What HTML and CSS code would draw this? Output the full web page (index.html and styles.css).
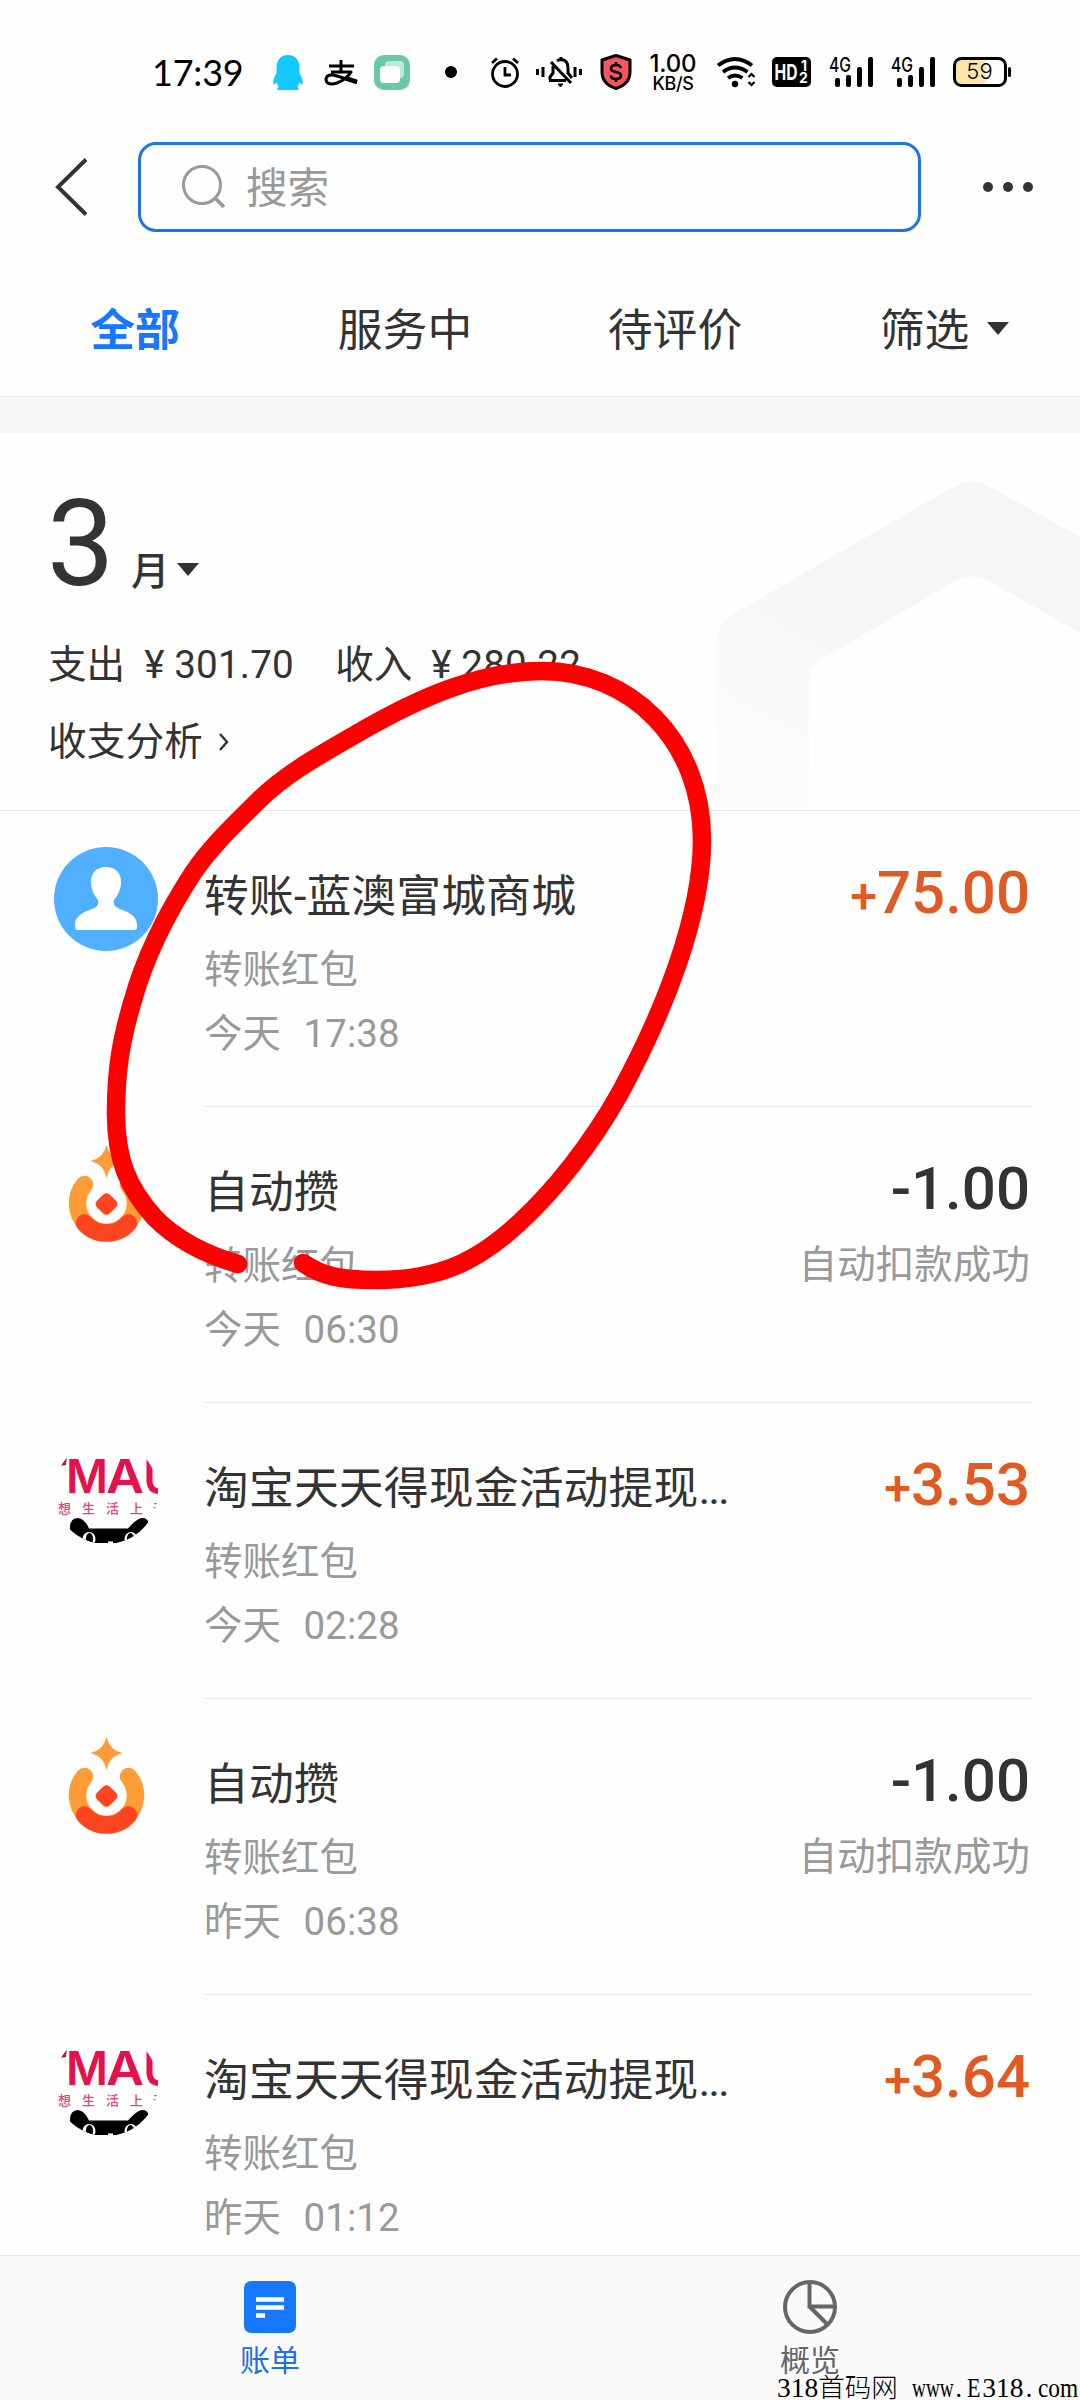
FILE: index.html
```html
<!DOCTYPE html>
<html lang="zh-CN">
<head>
<meta charset="utf-8">
<title>账单</title>
<link rel="stylesheet" href="styles.css">
</head>
<body>
<svg class="defs" width="0" height="0" aria-hidden="true">
  <defs>
    <clipPath id="round"><circle cx="52" cy="53" r="52"/></clipPath>
    <symbol id="saver" viewBox="0 0 104 104">
      <path d="M52.500 2Q55.500 15 68.500 18Q55.500 21 52.500 35Q49.500 21 36.500 18Q49.500 15 52.500 2Z" fill="#ff9c38"/>
      <path d="M30.500 41.500A29 29 0 1 0 74.500 41.500" fill="none" stroke="#ff9c38" stroke-width="17.500" stroke-linecap="round"/>
      <path d="M30.500 80A29 29 0 0 0 74.500 80" fill="none" stroke="#ff4420" stroke-width="17.500" stroke-linecap="round"/>
      <rect x="43.500" y="52" width="18" height="18" rx="4.500" transform="rotate(45 52.500 61)" fill="#ff4420"/>
    </symbol>
    <symbol id="tmall" viewBox="0 0 104 104">
      <g clip-path="url(#round)">
        <path d="M6 27L13 17L12 26Z" fill="#a31f50"/>
        <text class="tm-logo" x="12" y="54" textLength="42" lengthAdjust="spacingAndGlyphs">M</text>
        <text class="tm-logo" x="52" y="54" textLength="38" lengthAdjust="spacingAndGlyphs">A</text>
        <path d="M95.500 19V43Q96.500 52 105 52" fill="none" stroke="#e8104a" stroke-width="6"/>
        <text class="tm-tag" x="4 28 52 76 99" y="74">想生活上天</text>
        <path d="M16 92Q15 79 24 79Q31 80 35 89.500H74Q82 80 88 79Q96 79 94 88L90 108H16Z" fill="#000"/>
        <ellipse cx="35" cy="100" rx="6.500" ry="7" fill="#fff"/><ellipse cx="35.500" cy="100" rx="3.600" ry="6" fill="#000"/>
        <ellipse cx="77" cy="100" rx="6.500" ry="7" fill="#fff"/><ellipse cx="76.500" cy="100" rx="3.600" ry="6" fill="#000"/>
        <path d="M54 102.500h5v2h-5z" fill="#fff"/>
      </g>
    </symbol>
    <symbol id="signal" viewBox="829 54 45 38">
      <g fill="#000"><rect x="835" y="78" width="5" height="9" rx="2"/><rect x="846" y="75" width="5" height="12" rx="2"/><rect x="857" y="67" width="5" height="20" rx="2"/><rect x="868" y="57" width="5" height="30" rx="2"/></g>
      <text class="net" x="829" y="72" textLength="22" lengthAdjust="spacingAndGlyphs">4G</text>
    </symbol>
  </defs>
</svg>

<header class="status">
  <span class="clock">17:39</span>
  <svg class="i-qq" viewBox="273 54 30 38"><path d="M288 55c-8 0-11.500 6-11.500 13v5c-2.500 4-4 9-3 11 1 1 2.500-1 3-2 .5 2.500 1.500 4 2.500 5-2 .5-3 3 1 3h16c4 0 3-2.500 1-3 1-1 2-2.500 2.500-5 .5 1 2 3 3 2 1-2-.5-7-3-11v-5c0-7-3.500-13-11.500-13z" fill="#12c8ff"/></svg>
  <svg class="i-ali" viewBox="324 54 35 38"><g fill="none" stroke="#000" stroke-width="3"><path d="M329 66H354M341 60V72M331 72H351Q347 79 337 83Q326 86 326 79Q327 73 337 76Q346 79 357 82" stroke-linejoin="round"/><path d="M345 78L357 82" stroke-width="4.500"/></g></svg>
  <svg class="i-green" viewBox="374 54 36 38"><rect x="374" y="55" width="36" height="35" rx="10" fill="#67caa4"/><rect x="385" y="61" width="19" height="17" rx="4" fill="#bce8d8"/><rect x="380" y="66" width="20" height="17" rx="4" fill="#fff"/></svg>
  <span class="dot"></span>
  <svg class="i-alarm" viewBox="491 54 28 38"><g fill="none" stroke="#000" stroke-width="2.800"><circle cx="505" cy="74" r="12.500"/><path d="M492 63L497 58.500M518 63L513 58.500M505 67V75H511" /></g></svg>
  <svg class="i-bell" viewBox="536 54 46 38"><g fill="none" stroke="#000" stroke-width="3"><path d="M537.500 69V75M543 67V77M575 67V77M580.500 69V75"/><path d="M550 80V77L553 73V66M557 61Q559 59.500 561 59.500V57M561 59.500Q568 60 568 68V73L572 78M549 80.500H566M551 62L571 83"/><path d="M558 84H563L560.500 87Z" fill="#000" stroke-width="1"/></g></svg>
  <svg class="i-shield" viewBox="600 54 32 38"><path d="M616 55.500L630 60V72Q630 84 616 88.500Q602 84 602 72V60Z" fill="#f2575f" stroke="#000" stroke-width="3" stroke-linejoin="round"/><path d="M621 68Q620 65 616 65Q611 65 611 68.500Q611 71 616 72Q621 73 621 75.500Q621 79 616 79Q611 79 611 75.500M616 62V65M616 79V82" fill="none" stroke="#000" stroke-width="2.600"/></svg>
  <span class="speed"><b>1.00</b><b>KB/S</b></span>
  <svg class="i-wifi" viewBox="716 54 41 38"><g fill="none" stroke="#000" stroke-width="3.800"><path d="M718 65.500Q735 52.500 752 65.500M723 72Q735 63 747.500 72M728 78Q735 73 742.500 78"/><path d="M748.500 77L751.500 74L754.500 77M748.500 82L751.500 85L754.500 82" stroke-width="2.200"/></g><circle cx="735" cy="84" r="3.200"/></svg>
  <svg class="i-hd" viewBox="772 54 39 38"><rect x="772" y="57" width="39" height="30" rx="5"/><text class="hd" x="774.500" y="80" textLength="23" lengthAdjust="spacingAndGlyphs">HD</text><text class="hd-n" x="801" y="71">1</text><text class="hd-n" x="799" y="83">2</text></svg>
  <svg class="i-sig"><use href="#signal"/></svg>
  <svg class="i-sig"><use href="#signal"/></svg>
  <svg class="i-batt" viewBox="953 54 59 38"><rect x="956" y="60" width="30" height="25" rx="5" fill="#fbe6ab"/><rect x="954.500" y="58.500" width="51" height="27" rx="7" fill="none" stroke="#000" stroke-width="3"/><rect x="1008" y="67" width="3" height="10" rx="1.500"/><text class="pct" x="979.500" y="79" text-anchor="middle">59</text></svg>
</header>

<nav class="topbar">
  <svg class="back" viewBox="0 0 36 60"><path d="M34 2.500L6 30L34 57.500" fill="none" stroke="#333" stroke-width="4"/></svg>
  <div class="search">
    <svg class="lens" viewBox="0 0 46 46"><circle cx="21" cy="21" r="18.500" fill="none" stroke="#999" stroke-width="3"/><path d="M35 35L43 43" stroke="#999" stroke-width="3.500"/></svg>
    <span>搜索</span>
  </div>
  <div class="more"><i></i><i></i><i></i></div>
</nav>

<div class="tabs">
  <span class="on">全部</span><span>服务中</span><span>待评价</span><span>筛选<i class="tri"></i></span>
</div>
<div class="band"></div>

<section class="summary">
  <svg class="house" viewBox="716 470 364 339"><defs><linearGradient id="hg" gradientUnits="userSpaceOnUse" x1="740" y1="770" x2="840" y2="590"><stop offset="0" stop-color="#fcfcfc"/><stop offset="1" stop-color="#f6f6f6"/></linearGradient></defs><path d="M716 809V643Q716 624 735 612L953 486Q972 476 991 486L1080 536V632L991 581Q972 570 953 581L824 657Q809 666 809 682V809Z" fill="url(#hg)"/></svg>
  <div class="month"><span class="num">3</span><span class="yue">月</span><i class="tri"></i></div>
  <div class="totals"><span>支出</span><span class="yen">¥</span><span class="sum">301.70</span><span class="in">收入</span><span class="yen">¥</span><span class="sum">280.22</span></div>
  <div class="analysis">收支分析<svg viewBox="0 0 12 20"><path d="M2 2L9 10L2 18" fill="none" stroke="#333" stroke-width="2.400"/></svg></div>
</section>

<main class="list">
  <article class="item">
    <svg class="avatar" viewBox="0 0 104 104"><circle cx="52" cy="52" r="52" fill="#50b0ff"/><path d="M52 20C62 20 68 27 67 37C66 45 63 49 60 53C59 58 61 60 66 62C77 66 83 70 83 78V80Q83 83 80 83H24Q21 83 21 80V78C21 70 27 66 38 62C43 60 45 58 44 53C41 49 38 45 37 37C36 27 42 20 52 20Z" fill="#fff"/></svg>
    <div class="body"><div class="info"><h3>转账-蓝澳富城商城</h3><p>转账红包</p><p class="when">今天  <span>17:38</span></p></div><div class="amt plus"><strong><i>+</i>75.00</strong></div></div>
  </article>
  <article class="item">
    <svg class="avatar"><use href="#saver"/></svg>
    <div class="body"><div class="info"><h3>自动攒</h3><p>转账红包</p><p class="when">今天  <span>06:30</span></p></div><div class="amt"><strong>-1.00</strong><p>自动扣款成功</p></div></div>
  </article>
  <article class="item">
    <svg class="avatar"><use href="#tmall"/></svg>
    <div class="body"><div class="info"><h3>淘宝天天得现金活动提现<span class="dots">...</span></h3><p>转账红包</p><p class="when">今天  <span>02:28</span></p></div><div class="amt plus"><strong><i>+</i>3.53</strong></div></div>
  </article>
  <article class="item">
    <svg class="avatar"><use href="#saver"/></svg>
    <div class="body"><div class="info"><h3>自动攒</h3><p>转账红包</p><p class="when">昨天  <span>06:38</span></p></div><div class="amt"><strong>-1.00</strong><p>自动扣款成功</p></div></div>
  </article>
  <article class="item">
    <svg class="avatar"><use href="#tmall"/></svg>
    <div class="body"><div class="info"><h3>淘宝天天得现金活动提现<span class="dots">...</span></h3><p>转账红包</p><p class="when">昨天  <span>01:12</span></p></div><div class="amt plus"><strong><i>+</i>3.64</strong></div></div>
  </article>
</main>

<footer class="tabbar">
  <div class="tb on"><svg viewBox="0 0 56 56"><rect x="2" y="2" width="52" height="52" rx="7" fill="#1677ff"/><path d="M14 20.500H42M14 28.500H42M14 36.500H23" stroke="#fff" stroke-width="4.400"/></svg><span>账单</span></div>
  <div class="tb"><svg viewBox="0 0 56 56"><g fill="none" stroke="#666" stroke-width="4"><circle cx="28" cy="28" r="25"/><path d="M27.500 3V27.500H53M27.500 27.500L45 45"/></g></svg><span>概览</span></div>
</footer>

<svg class="marker" viewBox="0 0 1080 2400"><path d="M238 1264C200 1253 175 1238 155 1218C128 1188 116 1160 116 1113C116 1070 121 1040 133 1000C145 957 165 916 193 873C211 846 235 824 259 800C288 772 322 754 358 733C420 697 480 671 542 671C630 671 702 740 702 840C702 915 665 1010 620 1093C592 1143 555 1190 519 1223C478 1261 440 1280 376 1280C340 1280 322 1276 303 1263" fill="none" stroke="#f00" stroke-width="18.500" stroke-linecap="round" stroke-linejoin="round"/></svg>
<div class="watermark"><span>318</span><span class="cn">首码网</span><span class="nar w3">www</span><span class="cell">.</span><span class="nar e1">E</span><span>318</span><span class="cell">.</span><span class="nar co">com</span></div>
</body>
</html>
```
FILE: styles.css
```css
* { box-sizing: border-box; }
body {
  margin: 0;
  width: 1080px;
  height: 2400px;
  position: relative;
  overflow: hidden;
  display: flex;
  flex-direction: column;
  background: #fefefe;
  color: #333;
  font-family: Roboto, "Noto Sans CJK SC", sans-serif;
}
h3, p { margin: 0; font-weight: 400; }
.defs { position: absolute; }

.status { height: 142px; padding: 54px 0 0 152px; display: flex; align-items: flex-start; flex: none; }
.status svg { height: 38px; flex: none; display: block; }
.clock { width: 91px; font: 400 36px/36px Lato, sans-serif; color: #000; letter-spacing: -.2px; white-space: nowrap; }
.i-qq { width: 30px; margin-left: 30px; }
.i-ali { width: 35px; margin-left: 21px; }
.i-green { width: 36px; margin-left: 15px; }
.dot { width: 12px; height: 12px; border-radius: 50%; background: #000; margin: 12px 0 0 35px; }
.i-alarm { width: 28px; margin-left: 34px; }
.i-bell { width: 46px; margin-left: 17px; }
.i-shield { width: 32px; margin-left: 18px; }
.speed { width: 48px; margin-left: 17px; display: flex; flex-direction: column; align-items: center; color: #000; font-family: Inter, sans-serif; }
.speed b { font-weight: 500; font-size: 24px; line-height: 20px; letter-spacing: -.2px; }
.speed b + b { font-size: 18px; line-height: 20px; letter-spacing: -.4px; }
.i-wifi { width: 41px; margin-left: 19px; }
.i-hd { width: 39px; margin-left: 15px; }
.i-sig { width: 45px; margin-left: 17px; }
.i-hd + .i-sig { margin-left: 18px; }
.i-batt { width: 59px; margin-left: 17px; }
.net { font: 500 20px Inter, sans-serif; }
.hd { font: 700 22px Inter, sans-serif; fill: #fff; }
.hd-n { font: 700 14px Inter, sans-serif; fill: #fff; }
.pct { font: 300 22px Inter, sans-serif; }

.topbar { height: 90px; flex: none; display: flex; align-items: center; }
.back { width: 36px; height: 60px; margin-left: 52px; }
.search { width: 783px; height: 90px; margin-left: 50px; padding-left: 40px; border: 3px solid #1f74e6; border-radius: 18px; display: flex; align-items: center; gap: 19px; color: #999; font-size: 41.600px; line-height: 60px; }
.search span { padding-top: 3px; }
.lens { width: 46px; height: 46px; }
.more { margin-left: 62px; display: flex; gap: 10px; }
.more i { width: 10px; height: 10px; border-radius: 50%; background: #333; }

.tabs { height: 164px; flex: none; display: grid; grid-template-columns: repeat(4, 1fr); align-items: center; justify-items: center; font-size: 44.8px; line-height: 60px; padding-top: 33px; }
.tabs .on { color: #1677ff; font-weight: 700; }
.tabs span { display: flex; align-items: center; }
.tri { border: 11px solid transparent; border-top: 13px solid #333; border-bottom: 0; }
.tabs .tri { margin: 0 1px 4px 18px; }
.band { height: 37px; flex: none; background: #f7f7f7; border-top: 1px solid #ededed; }

.summary { height: 378px; flex: none; position: relative; padding-left: 48px; border-bottom: 1px solid #e9e9e9; }
.house { position: absolute; right: 0; bottom: 0; width: 364px; height: 339px; z-index: -1; }
.month { display: flex; align-items: flex-end; height: 170px; padding-bottom: 17px; }
.num { font-size: 120px; line-height: 90px; width: 83px; text-indent: -1px; height: 87px; }
.yue { font-size: 38.4px; line-height: 38px; font-weight: 500; height: 38px; margin-bottom: -5px; }
.month .tri { margin: 0 0 10px 8px; }
.totals, .analysis { font-size: 38.6px; line-height: 60px; display: flex; align-items: center; }
.totals { margin-top: 32px; }
.yen { margin-left: 19px; width: 30px; }
.sum { width: 121px; letter-spacing: .2px; }
.in { margin-left: 40px; }
.analysis { margin-top: 17px; letter-spacing: .2px; }
.analysis svg { width: 12px; height: 20px; margin-left: 15px; }

.list { flex: none; height: 1445px; overflow: hidden; }
.item { height: 296px; display: flex; padding: 0 48px 0 54px; }
.avatar { width: 104px; height: 104px; margin: 36px 46px 0 0; flex: none; }
.body { flex: 1; display: flex; justify-content: space-between; border-bottom: 1px solid #ebebeb; }
.info { padding-top: 56px; }
h3 { font-size: 44.8px; line-height: 60px; white-space: nowrap; letter-spacing: .15px; }
.dots { letter-spacing: -2px; }
p { font-size: 38.4px; line-height: 60px; color: #999; letter-spacing: .15px; }
h3 + p { margin-top: 13px; }
.when { margin-top: 4px; white-space: pre; }
.when span { margin-left: 3px; }
.amt { padding: 52px 2px 0 0; text-align: right; }
.amt strong { display: block; font-size: 60px; line-height: 60px; font-weight: 500; }
.amt i { font-size: 48px; line-height: 40px; font-style: normal; }
.amt p { margin-top: 16px; }
.plus { color: #e05a24; }
.tm-logo { font: 600 47px Inter, sans-serif; fill: #e8104a; }
.tm-tag { font: 500 13px "Noto Sans CJK SC", sans-serif; fill: #e0457c; }

.tabbar { flex: none; height: 145px; margin-top: -1px; background: #fafafa; border-top: 1px solid #e6e6e6; display: grid; grid-template-columns: 1fr 1fr; position: relative; }
.tb { display: flex; flex-direction: column; align-items: center; padding-top: 23px; font-size: 30px; line-height: 40px; color: #666; }
.tb svg { width: 56px; height: 56px; margin-bottom: 6px; }
.tb.on { color: #1f6fe0; }

.marker { position: absolute; inset: 0; width: 1080px; height: 2400px; pointer-events: none; }
.watermark { position: absolute; left: 777px; top: 2373px; width: 310px; height: 30px; display: flex; color: #000; font: 400 27.5px/30px "Liberation Serif", "Noto Sans CJK SC", serif; }
.watermark .cn { font-size: 26.500px; font-weight: 300; width: 94px; }
.nar { transform-origin: 0 50%; }
.w3 { width: 41px; transform: scaleX(.7); }
.cell { width: 14px; padding-left: 2px; }
.e1 { width: 15px; transform: scaleX(.8); }
.co { width: 42px; transform: scaleX(.85); }
```
